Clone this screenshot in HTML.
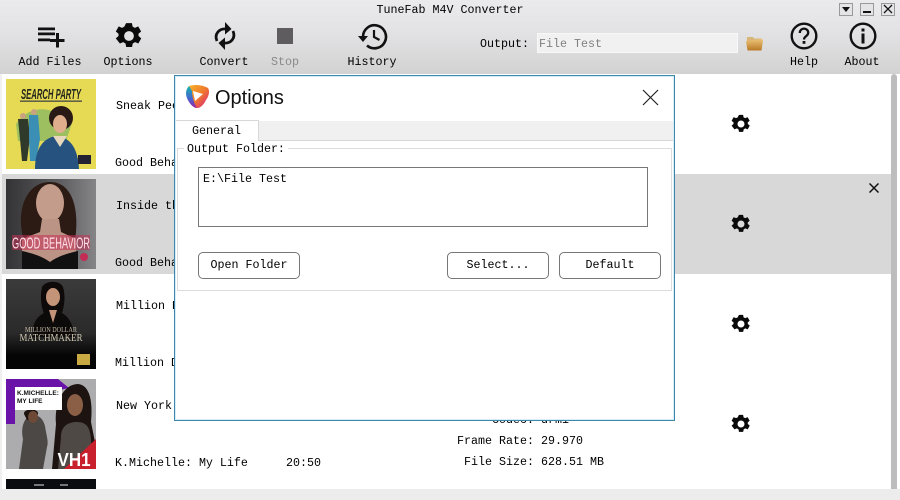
<!DOCTYPE html>
<html><head><meta charset="utf-8">
<style>
html,body{margin:0;padding:0;background:#fff}
#a{position:relative;width:900px;height:500px;overflow:hidden;background:#fff;font-family:"Liberation Mono",monospace;font-size:11.67px;color:#000}
#a div,#a svg{position:absolute}
.t{white-space:pre;line-height:14px;height:14px}
.c{text-align:center}
.b{border:1px solid #777;border-radius:5px;background:#fff;box-sizing:border-box;height:27px;width:102px;line-height:25px;text-align:center;top:252px}
.w{border:1px solid #999;box-sizing:border-box;background:#e4e4e6}
</style></head><body><div id="a">
<div style="left:0;top:0;width:900px;height:74px;background:linear-gradient(#ebebed,#e2e2e4 45%,#d2d2d2)"></div>
<div class="t c" style="left:0;top:3px;width:900px">TuneFab M4V Converter</div>

<svg style="left:36px;top:26px" width="30" height="22" viewBox="0 0 30 22"><path d="M2 1.500h17v2.800H2zM2 6.500h17v2.800H2zM2 12.500h12v2.800H2zM20 7h3v6h5.500v3H23v5.500h-3V16h-6v-3h6z" fill="#111"/></svg>
<div class="t c" style="left:10px;top:55px;width:80px">Add Files</div>
<svg style="left:115px;top:22px" width="28" height="28" viewBox="0 0 24 24"><path fill="#0a0a0a" fill-rule="evenodd" d="M9.500 1h5l.6 3 2 1 2.800-1.300 2.500 4.400-2.300 2 .1 1.900 2.300 2-2.500 4.400-2.800-1.100-2 1.100-.6 3h-5l-.6-3-2-1.100-2.800 1.100L.7 14l2.300-2v-1.900l-2.300-2 2.500-4.400L6 5l2-1zM12 7.800a4.200 4.200 0 1 0 0 8.400 4.200 4.200 0 0 0 0-8.400z"/></svg>
<div class="t c" style="left:88px;top:55px;width:80px">Options</div>
<svg style="left:212px;top:21px" width="26" height="30" viewBox="0 0 26 30"><g fill="none" stroke="#111" stroke-width="2.800"><path d="M5 20C2 13 7 7 15 8"/><path d="M21 10c3 7-2 13-10 12"/></g><path fill="#111" d="M13 1l6.500 7-6.500 5.500zM13 29l-6.500-7 6.500-5.500z"/></svg>
<div class="t c" style="left:184px;top:55px;width:80px">Convert</div>
<div style="left:277px;top:28px;width:16px;height:16px;background:#5e5c5e"></div>
<div class="t c" style="left:245px;top:55px;width:80px;color:#8a8a8a">Stop</div>
<svg style="left:358px;top:23px" width="30" height="27" viewBox="0 0 30 27"><path fill="none" stroke="#111" stroke-width="2.600" d="M5 13.500A11.500 11.500 0 1 1 9 22.500"/><path fill="#111" d="M0 13h10l-5 6z"/><path fill="none" stroke="#111" stroke-width="2.200" d="M16 7v7l5.500 3"/></svg>
<div class="t c" style="left:332px;top:55px;width:80px">History</div>

<div class="t" style="left:480px;top:37px">Output:</div>
<div style="left:538px;top:34px;width:199px;height:18px;background:#f1f1f1;box-shadow:0 0 0 1px #f8f8f8"></div>
<div class="t" style="left:539px;top:37px;color:#808080">File Test</div>
<svg style="left:746px;top:34px" width="17" height="17" viewBox="0 0 17 17"><defs><linearGradient id="f" x1="0" y1="0" x2="0" y2="1"><stop offset="0" stop-color="#edc478"/><stop offset="1" stop-color="#b97a26"/></linearGradient></defs><path fill="#d8b67a" d="M1 3h6l1 1.500h7V8H1z"/><path fill="url(#f)" d="M0 7l16 -2 1 1-1.500 10.500H1.500z"/></svg>

<div class="w" style="left:839px;top:3px;width:14px;height:13px"></div>
<svg style="left:842px;top:7px" width="8" height="5"><path d="M0 0h8L4 5z" fill="#111"/></svg>
<div class="w" style="left:860px;top:3px;width:14px;height:13px"></div>
<div style="left:863px;top:11px;width:8px;height:2px;background:#111"></div>
<div class="w" style="left:881px;top:3px;width:14px;height:13px"></div>
<svg style="left:883px;top:4px" width="10" height="10"><path d="M1 1l8 8M9 1L1 9" stroke="#111" stroke-width="1.300"/></svg>

<svg style="left:790px;top:22px" width="28" height="28" viewBox="0 0 28 28"><circle cx="14" cy="14" r="12.300" fill="none" stroke="#111" stroke-width="2.400"/><path d="M9.800 11c0-6 8.600-5.500 8.400-.3 0 3.500-4 3.300-4.200 6.800" fill="none" stroke="#111" stroke-width="2.300"/><rect x="12.600" y="19" width="2.800" height="2.800" fill="#111"/></svg>
<div class="t c" style="left:764px;top:55px;width:80px">Help</div>
<svg style="left:849px;top:22px" width="28" height="28" viewBox="0 0 28 28"><circle cx="14" cy="14" r="12.300" fill="none" stroke="#111" stroke-width="2.400"/><rect x="12.500" y="6.500" width="3" height="3" fill="#111"/><rect x="12.500" y="11.500" width="3" height="10" fill="#111"/></svg>
<div class="t c" style="left:822px;top:55px;width:80px">About</div>

<div style="left:2px;top:174px;width:889px;height:100px;background:#d8d8d8"></div>
<div style="left:0;top:74px;width:2px;height:415px;background:#f0f0f0"></div>
<div style="left:891px;top:74px;width:6px;height:415px;background:#bdbdbd;border-radius:3px 3px 0 0"></div>
<div style="left:0;top:489px;width:900px;height:11px;background:#ececec"></div>

<svg style="left:6px;top:79px" width="90" height="90" viewBox="0 0 90 90"><rect width="90" height="90" fill="#e6da55"/><path d="M10 45C20 30 35 28 46 32L66 44 60 62H12z" fill="#9dbf5f"/><path d="M12 40h10l2 18-3 24h-5l-2-22z" fill="#2f3a2a"/><circle cx="17" cy="37" r="3" fill="#c9a27f"/><path d="M23 36h9l2 24-4 22h-6l-1-22z" fill="#3b8fb5"/><circle cx="28" cy="33" r="3" fill="#c9a27f"/><path d="M29 90c0-20 8-31 21-33 14 1 22 12 23 33z" fill="#25527f"/><circle cx="55" cy="39" r="12" fill="#2a1a16"/><ellipse cx="54" cy="45" rx="7" ry="9" fill="#dfae8d"/><path d="M47 57l7 11 7-11z" fill="#e6d7bd"/><rect x="72" y="76" width="13" height="9" fill="#223"/><text x="45" y="20" font-size="15" font-weight="bold" font-style="italic" text-anchor="middle" textLength="60" lengthAdjust="spacingAndGlyphs" font-family="Liberation Sans" fill="#23261b">SEARCH PARTY</text><rect x="14" y="21.500" width="62" height="1.300" fill="#444"/></svg>
<svg style="left:6px;top:179px" width="90" height="90" viewBox="0 0 90 90"><defs><linearGradient id="g2" x1="0" y1="0" x2="1" y2="0"><stop offset="0" stop-color="#333335"/><stop offset=".6" stop-color="#5e5e60"/><stop offset="1" stop-color="#858587"/></linearGradient></defs><rect width="90" height="90" fill="url(#g2)"/><path d="M18 62C9 32 20 3 44 3c21 0 30 24 25 59z" fill="#2c1a14"/><ellipse cx="44" cy="24" rx="14" ry="19" fill="#c49c8b"/><path d="M36 40h17l2 13 15 7v30H16V60l18-7z" fill="#bc9486"/><path d="M16 72c9 2 20 5 28 11 8-6 19-9 28-11v18H16z" fill="#111"/><rect x="6" y="56" width="78" height="15" fill="#c52f56" opacity=".55"/><text x="45" y="69.500" font-size="16" text-anchor="middle" textLength="78" lengthAdjust="spacingAndGlyphs" font-family="Liberation Sans" fill="#ffe0ea">GOOD BEHAVIOR</text><circle cx="78" cy="78" r="4" fill="#c32c55"/></svg>
<svg style="left:6px;top:279px" width="90" height="90" viewBox="0 0 90 90"><defs><linearGradient id="g3" x1="0" y1="0" x2="0" y2="1"><stop offset="0" stop-color="#3c3b3c"/><stop offset=".6" stop-color="#2b2a2a"/><stop offset=".85" stop-color="#050505"/></linearGradient></defs><rect width="90" height="90" fill="url(#g3)"/><path d="M36 8c4-7 18-7 21 0 3 10 1 20-1 26-6-3-13-3-18 1-3-8-4-18-2-27z" fill="#0e0a0a"/><ellipse cx="47" cy="18" rx="7" ry="9" fill="#c49479"/><path d="M27 50c1-10 9-18 20-18s18 8 20 18l2 8H26z" fill="#0d0a0a"/><path d="M43 31h8l-4 13z" fill="#c49479"/><text x="45" y="53" font-size="7.500" text-anchor="middle" textLength="52" lengthAdjust="spacingAndGlyphs" font-family="Liberation Serif" fill="#c4bba7">MILLION DOLLAR</text><text x="45" y="62" font-size="10" text-anchor="middle" textLength="63" lengthAdjust="spacingAndGlyphs" font-family="Liberation Serif" fill="#d3cab4">MATCHMAKER</text><rect x="71" y="75" width="13" height="11" fill="#c9a941"/></svg>
<svg style="left:6px;top:379px" width="90" height="90" viewBox="0 0 90 90"><rect width="90" height="90" fill="#acacae"/><path d="M0 0h52l11 9-54 11v25H0z" fill="#6a13a8"/><path d="M13 90l4-30c-3-14 3-22 7-23 7-3 13 2 15 10 1 8 4 16 2 21l-4 22z" fill="#4c4845"/><path d="M18 35c-1-6 15-6 14 0l-2 6H21z" fill="#1d1412"/><ellipse cx="27" cy="38" rx="5" ry="6" fill="#6d4a35"/><path d="M50 45c-2-22 8-40 22-40 12 1 15 18 13 38l5 25v22H46z" fill="#1d1412"/><ellipse cx="69" cy="26" rx="8" ry="11" fill="#8a5f46"/><path d="M52 90l3-32c0-10 6-15 16-15s13 6 14 17l1 30z" fill="#4e4945"/><rect x="9" y="8" width="47" height="23" fill="#fff"/><text x="11" y="16" font-size="6.500" font-weight="bold" font-family="Liberation Sans" fill="#111">K.MICHELLE:</text><text x="11" y="24" font-size="6.500" font-weight="bold" font-family="Liberation Sans" fill="#111">MY LIFE</text><path d="M58 90l32-30v30z" fill="#c8202c"/><text x="68" y="87" font-size="18" font-weight="bold" text-anchor="middle" textLength="33" lengthAdjust="spacingAndGlyphs" font-family="Liberation Sans" fill="#fff">VH1</text></svg>
<svg style="left:6px;top:479px" width="90" height="10" viewBox="0 0 90 10"><rect width="90" height="10" fill="#0b0c10"/><rect x="28" y="5" width="10" height="2" fill="#777"/><rect x="54" y="5" width="8" height="2" fill="#777"/></svg>

<div class="t" style="left:116px;top:99px">Sneak Peek</div>
<div class="t" style="left:115px;top:156px">Good Behavior</div>
<div class="t" style="left:116px;top:199px">Inside the</div>
<div class="t" style="left:115px;top:256px">Good Behavior</div>
<div class="t" style="left:116px;top:299px">Million Dollar</div>
<div class="t" style="left:115px;top:356px">Million Dollar</div>
<div class="t" style="left:116px;top:399px">New York</div>
<div class="t" style="left:115px;top:456px">K.Michelle: My Life</div>
<div class="t" style="left:286px;top:456px">20:50</div>
<div class="t" style="left:492px;top:413px">Codec: drmi</div>
<div class="t" style="left:457px;top:434px">Frame Rate:</div><div class="t" style="left:541px;top:434px">29.970</div>
<div class="t" style="left:464px;top:455px">File Size:</div><div class="t" style="left:541px;top:455px">628.51 MB</div>

<svg style="left:731px;top:114px" width="20" height="20" viewBox="0 0 24 24"><path fill="#0a0a0a" fill-rule="evenodd" d="M9.500 1h5l.6 3 2 1 2.800-1.300 2.500 4.400-2.300 2 .1 1.900 2.300 2-2.500 4.400-2.800-1.100-2 1.100-.6 3h-5l-.6-3-2-1.100-2.800 1.100L.7 14l2.300-2v-1.900l-2.300-2 2.500-4.400L6 5l2-1zM12 7.800a4.200 4.200 0 1 0 0 8.400 4.200 4.200 0 0 0 0-8.400z"/></svg>
<svg style="left:731px;top:214px" width="20" height="20" viewBox="0 0 24 24"><path fill="#0a0a0a" fill-rule="evenodd" d="M9.500 1h5l.6 3 2 1 2.800-1.300 2.500 4.400-2.300 2 .1 1.900 2.300 2-2.500 4.400-2.800-1.100-2 1.100-.6 3h-5l-.6-3-2-1.100-2.800 1.100L.7 14l2.300-2v-1.900l-2.300-2 2.500-4.400L6 5l2-1zM12 7.800a4.200 4.200 0 1 0 0 8.400 4.200 4.200 0 0 0 0-8.400z"/></svg>
<svg style="left:731px;top:314px" width="20" height="20" viewBox="0 0 24 24"><path fill="#0a0a0a" fill-rule="evenodd" d="M9.500 1h5l.6 3 2 1 2.800-1.300 2.500 4.400-2.300 2 .1 1.900 2.300 2-2.500 4.400-2.800-1.100-2 1.100-.6 3h-5l-.6-3-2-1.100-2.800 1.100L.7 14l2.300-2v-1.900l-2.300-2 2.500-4.400L6 5l2-1zM12 7.800a4.200 4.200 0 1 0 0 8.400 4.200 4.200 0 0 0 0-8.400z"/></svg>
<svg style="left:731px;top:414px" width="20" height="20" viewBox="0 0 24 24"><path fill="#0a0a0a" fill-rule="evenodd" d="M9.500 1h5l.6 3 2 1 2.800-1.300 2.500 4.400-2.300 2 .1 1.900 2.300 2-2.500 4.400-2.800-1.100-2 1.100-.6 3h-5l-.6-3-2-1.100-2.800 1.100L.7 14l2.300-2v-1.900l-2.300-2 2.500-4.400L6 5l2-1zM12 7.800a4.200 4.200 0 1 0 0 8.400 4.200 4.200 0 0 0 0-8.400z"/></svg>
<svg style="left:869px;top:183px" width="10" height="10"><path d="M.5.500l9 9M9.500.500l-9 9" stroke="#111" stroke-width="1.500"/></svg>

<div style="left:174px;top:75px;width:501px;height:346px;box-sizing:border-box;background:#fff;border:1px solid #3f86ad;box-shadow:inset 0 0 0 1px #d8eef6"></div>
<svg style="left:185px;top:84px" width="25" height="25" viewBox="0 0 25 25"><defs><linearGradient id="l" x1="0" y1="0" x2="1" y2="1"><stop offset="0" stop-color="#f5b22a"/><stop offset=".5" stop-color="#ef7a2c"/><stop offset="1" stop-color="#d8188a"/></linearGradient><linearGradient id="m" x1="0" y1="0" x2="0" y2="1"><stop offset="0" stop-color="#17b5b0"/><stop offset=".6" stop-color="#4a62d0"/><stop offset="1" stop-color="#a020a0"/></linearGradient></defs><path d="M4 2c6-2 14-1 19 2 2 3 1 8-2 12-2 4-5 8-9 8-3 0-6-3-8-7z" fill="url(#l)"/><path d="M4 2C0 6 0 12 4 18c2 3 5 6 8 6-3-5-5-11-5-17z" fill="url(#m)"/><path d="M8 7l10 3-8 7z" fill="#fff"/></svg>
<div class="t" style="left:215px;top:86px;height:24px;line-height:24px;font-family:'Liberation Sans',sans-serif;font-size:20px;color:#111">Options</div>
<svg style="left:642px;top:89px" width="17" height="17"><path d="M1 1l15 15M16 1L1 16" stroke="#222" stroke-width="1.200"/></svg>

<div style="left:176px;top:121px;width:497px;height:19px;background:#f0f0f0"></div>
<div style="left:176px;top:140px;width:497px;height:1px;background:#d8d8d8"></div>
<div style="left:176px;top:120px;width:83px;height:21px;box-sizing:border-box;background:#fff;border-right:1px solid #d8d8d8;border-top:1px solid #d8d8d8"></div>
<div class="t" style="left:192px;top:124px">General</div>
<div style="left:177px;top:148px;width:495px;height:143px;box-sizing:border-box;border:1px solid #dcdcdc"></div>
<div class="t" style="left:184px;top:142px;background:#fff;padding:0 3px">Output Folder:</div>
<div style="left:198px;top:167px;width:450px;height:60px;box-sizing:border-box;border:1px solid #777"></div>
<div class="t" style="left:203px;top:172px">E:\File Test</div>
<div class="b" style="left:198px">Open Folder</div>
<div class="b" style="left:447px">Select...</div>
<div class="b" style="left:559px">Default</div>
</div></body></html>
